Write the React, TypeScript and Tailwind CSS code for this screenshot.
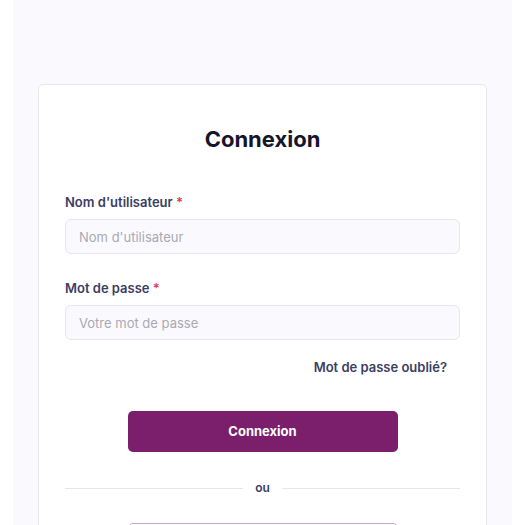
export default function App() {
  return (
    <div className="min-h-screen bg-white" style={{ fontFamily: 'Inter, "Open Sans", sans-serif' }}>
      <div className="mx-[13px] min-h-screen bg-[#fafafe] pt-[84px] px-[25px]">
        <div className="rounded-[5px] border border-[#e7e7ee] bg-white px-[26px] pt-[40px] pb-10">
          <h1 className="text-center text-[22px] font-bold leading-7 text-[#15152b]">Connexion</h1>

          <div className="mt-[40px]">
            <label className="block text-[13px] font-semibold leading-[18px] text-[#3b3d63]">
              Nom d'utilisateur <span className="text-[#e0394f]">*</span>
            </label>
            <input
              placeholder="Nom d'utilisateur"
              className="mt-2 h-[35px] w-full rounded-[6px] border border-[#e6e6ee] bg-[#fafafe] px-[13px] text-[13px] text-[#333] placeholder:text-[#a9a9b4] outline-none"
            />
          </div>

          <div className="mt-[25px]">
            <label className="block text-[13px] font-semibold leading-[18px] text-[#3b3d63]">
              Mot de passe <span className="text-[#e0394f]">*</span>
            </label>
            <input
              type="password"
              placeholder="Votre mot de passe"
              className="mt-2 h-[35px] w-full rounded-[6px] border border-[#e6e6ee] bg-[#fafafe] px-[13px] text-[13px] text-[#333] placeholder:text-[#a9a9b4] outline-none"
            />
          </div>

          <div className="mt-[18px] flex justify-end pr-[13px]">
            <a className="text-[13px] font-semibold leading-[18px] text-[#3b3d63]">Mot de passe oublié?</a>
          </div>

          <div className="mt-[35px] flex justify-center">
            <button className="h-[41px] w-[270px] rounded-[5px] bg-[#7b1e6c] text-[13px] font-bold text-white">
              Connexion
            </button>
          </div>

          <div className="mt-[27px] flex items-center gap-3">
            <div className="h-px flex-1 bg-[#e6e6ec]" />
            <span className="text-[12px] font-semibold text-[#3b3d63]">ou</span>
            <div className="h-px flex-1 bg-[#e6e6ec]" />
          </div>

          <div className="mt-[26px] flex justify-center">
            <button className="h-[41px] w-[270px] rounded-[5px] border border-[#c9a8bf] bg-white text-[13px] font-bold text-[#7b1e6c]">
              Créer un compte
            </button>
          </div>
        </div>
      </div>
    </div>
  );
}
